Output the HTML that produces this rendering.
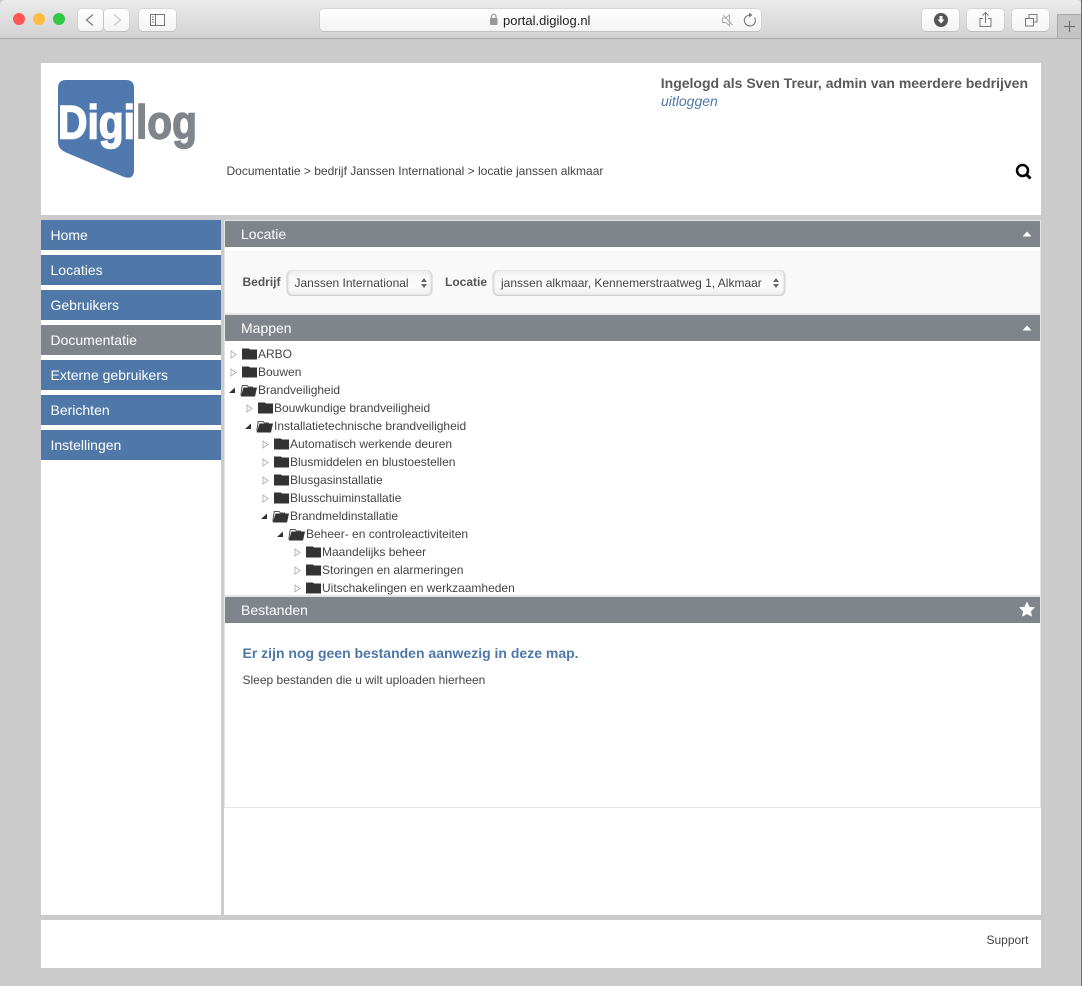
<!DOCTYPE html>
<html><head><meta charset="utf-8">
<style>
html,body{margin:0;padding:0;background:#cbcbcb}
body{width:1082px;height:986px;position:relative;overflow:hidden;font-family:"Liberation Sans",sans-serif;color:#444}
.a{position:absolute}
.t{position:absolute;white-space:nowrap}
.btn{position:absolute;top:9px;height:22px;background:linear-gradient(#fff,#f4f4f4);border-radius:4px;box-shadow:0 0 0 .5px #c4c4c4,0 1px 0 #bbb}
.nav{position:absolute;left:41px;width:180px;height:30px;background:#4f78a8;color:#fff;font-size:14px;line-height:30px;text-indent:9.5px}
.ph{position:absolute;left:225px;width:815px;height:26px;background:#80858c;color:#fff;font-size:14px;line-height:26px;text-indent:16px}
.r{position:absolute;font-size:12px;line-height:18px;color:#444;white-space:nowrap}
.sel{position:absolute;top:270px;height:25px;background:linear-gradient(#ececec,#f9f9f9 30%,#fbfbfb 70%,#ededed);border-radius:5px;box-shadow:inset 2px 0 2px -1px #ccc,inset -2px 0 2px -1px #ccc,0 .5px 0 .5px #d0d0d0;font-size:12px;line-height:26px;color:#444;white-space:nowrap}
svg{position:absolute;overflow:visible}
</style></head><body>

<!-- window chrome -->
<div class="a" style="left:0;top:0;width:1082px;height:38px;background:linear-gradient(#ebebeb,#d2d2d2);border-bottom:1px solid #a8a8a8;border-radius:5px 5px 0 0"></div>
<div class="a" style="left:1081px;top:0;width:1px;height:986px;background:#6b6f78"></div>
<div class="a" style="left:13px;top:13px;width:12px;height:12px;border-radius:50%;background:#fc5753"></div>
<div class="a" style="left:33px;top:13px;width:12px;height:12px;border-radius:50%;background:#fdbc40"></div>
<div class="a" style="left:53px;top:13px;width:12px;height:12px;border-radius:50%;background:#33c748"></div>

<div class="btn" style="left:78px;width:25px"></div>
<div class="btn" style="left:104px;width:25px"></div>
<svg style="left:0;top:0" width="1" height="1"><path d="M93 14.500l-6.500 5.500 6.500 5.500" fill="none" stroke="#808080" stroke-width="1.300"/><path d="M114 14.500l6.500 5.500-6.500 5.500" fill="none" stroke="#cacaca" stroke-width="1.300"/></svg>
<div class="btn" style="left:139px;width:37px"></div>
<svg style="left:0;top:0" width="1" height="1"><rect x="150.5" y="14.5" width="14" height="11" fill="none" stroke="#777"/><path d="M155.5 14.5v11" stroke="#777"/><path d="M152 17h2M152 19.500h2M152 22h2" stroke="#888"/></svg>

<div class="btn" style="left:320px;width:441px"></div>
<svg style="left:0;top:0" width="1" height="1"><rect x="490" y="18" width="7.500" height="7" rx="1" fill="#999"/><path d="M491.500 18v-1.500a2.200 2.200 0 0 1 4.500 0V18" fill="none" stroke="#999" stroke-width="1.200"/></svg>
<div class="t" style="left:503px;top:13px;font-size:13px;line-height:15px;color:#222">portal.digilog.nl</div>
<svg style="left:0;top:0" width="1" height="1">
<path d="M722.500 18h3l4-3v10.500l-4-3h-3z" fill="none" stroke="#aaa"/><path d="M723 15l9.500 10" stroke="#aaa"/>
<path d="M754.500 17.500a5.500 5.500 0 1 1-5-2.500" fill="none" stroke="#777" stroke-width="1.100"/><path d="M749 12.500l3.500 2.500-3.500 2.500z" fill="#777"/>
</svg>

<div class="btn" style="left:922px;width:37px"></div>
<div class="btn" style="left:967px;width:37px"></div>
<div class="btn" style="left:1012px;width:37px"></div>
<svg style="left:0;top:0" width="1" height="1">
<circle cx="941" cy="20" r="7" fill="#555"/><path d="M939.500 16h3v3.500h2l-3.500 4-3.500-4h2z" fill="#fff"/>
<path d="M983 18.500h-3v8h11v-8h-3" fill="none" stroke="#777"/><path d="M985.500 23v-10M982.500 15.500l3-3 3 3" fill="none" stroke="#777"/>
<path d="M1029 18v-3.500h8v7.500h-3.500" fill="none" stroke="#777"/><rect x="1025.500" y="18.500" width="8" height="7.500" fill="#f8f8f8" stroke="#777"/>
</svg>
<div class="a" style="left:1057px;top:14px;width:24px;height:24px;background:#c4c4c4;border-left:1px solid #a8a8a8;border-top:1px solid #a8a8a8;box-sizing:border-box"></div>
<svg style="left:0;top:0" width="1" height="1"><path d="M1069.500 21v11M1064 26.500h11" stroke="#666"/></svg>

<!-- header -->
<div class="a" style="left:41px;top:63px;width:1000px;height:152px;background:#fff"></div>
<svg style="left:0;top:0" width="1" height="1">
<path d="M66 80H126Q134 80 134 88V170Q134 180 124 177L66 152.500Q58 149 58 142V88Q58 80 66 80Z" fill="#4f78ae"/>
<text x="58" y="138.500" font-family="'Liberation Sans',sans-serif" font-size="47" font-weight="700" fill="#fff" stroke="#fff" stroke-width="1.600" textLength="77" lengthAdjust="spacingAndGlyphs">Digi</text>
<text x="136" y="138.500" font-family="'Liberation Sans',sans-serif" font-size="47" font-weight="700" fill="#80858c" stroke="#80858c" stroke-width="1.400" textLength="61" lengthAdjust="spacingAndGlyphs">log</text>
</svg>
<div class="t" style="right:54px;top:75px;font-size:14px;line-height:16px;font-weight:700;color:#5a5a5a">Ingelogd als Sven Treur, admin van meerdere bedrijven</div>
<div class="t" style="left:661px;top:93px;font-size:14px;line-height:16px;font-style:italic;color:#4f78a8">uitloggen</div>
<div class="t" style="left:226.500px;top:164px;font-size:12px;line-height:15px;color:#444">Documentatie &gt; bedrijf Janssen International &gt; locatie janssen alkmaar</div>
<svg style="left:0;top:0" width="1" height="1"><circle cx="1022.500" cy="170.500" r="5.500" fill="none" stroke="#000" stroke-width="2.500"/><path d="M1026.500 174.500l4 4" stroke="#000" stroke-width="3"/></svg>

<!-- nav -->
<div class="a" style="left:41px;top:220px;width:180px;height:695px;background:#fff"></div>
<div class="nav" style="top:220px">Home</div>
<div class="nav" style="top:255px">Locaties</div>
<div class="nav" style="top:290px">Gebruikers</div>
<div class="nav" style="top:325px;background:#80858c">Documentatie</div>
<div class="nav" style="top:360px">Externe gebruikers</div>
<div class="nav" style="top:395px">Berichten</div>
<div class="nav" style="top:430px">Instellingen</div>

<!-- content -->
<div class="a" style="left:224px;top:220px;width:817px;height:695px;background:#fff"></div>
<div class="a" style="left:224px;top:220px;width:817px;height:588px;background:#e4e4e4"></div>
<div class="ph" style="top:221px">Locatie</div>
<svg style="left:0;top:0" width="1" height="1"><path d="M1022.500 236.500l4.500-5 4.500 5z" fill="#fff"/></svg>
<div class="a" style="left:225px;top:247px;width:815px;height:66px;background:linear-gradient(#fff 4px,#f9f9f9 4px)"></div>
<div class="t" style="left:242.500px;top:275px;font-size:12px;line-height:14px;font-weight:700;color:#555">Bedrijf</div>
<div class="sel" style="left:287px;width:145px;text-indent:7.500px">Janssen International</div>
<svg style="left:0;top:0" width="1" height="1"><path d="M421 282l3-4 3 4zM421 284l3 4 3-4z" fill="#666"/></svg>
<div class="t" style="left:445px;top:275px;font-size:12px;line-height:14px;font-weight:700;color:#555">Locatie</div>
<div class="sel" style="left:493px;width:292px;text-indent:8px">janssen alkmaar, Kennemerstraatweg 1, Alkmaar</div>
<svg style="left:0;top:0" width="1" height="1"><path d="M773 282l3-4 3 4zM773 284l3 4 3-4z" fill="#666"/></svg>

<div class="ph" style="top:315px">Mappen</div>
<svg style="left:0;top:0" width="1" height="1"><path d="M1022.500 330.500l4.500-5 4.500 5z" fill="#fff"/></svg>
<div class="a" style="left:225px;top:341px;width:815px;height:254px;background:#fff;overflow:hidden"></div>

<svg style="left:0;top:0" width="1" height="1">
<defs>
<g id="c"><path d="M.5 1v7l5-3.500z" fill="#fff" stroke="#aaa" stroke-width=".8"/></g>
<g id="e"><path d="M6 0v5.500H0z" fill="#333"/></g>
<g id="f"><path d="M0 .5H7L8 1.500H15V11.500H0Z" fill="#333"/></g>
<g id="o"><path d="M.8 11.500L2.200 1.500H7L8.500 3H13" fill="none" stroke="#555" stroke-width="1"/><path d="M3.500 3.500H17L15 12.500H.8Z" fill="#333"/></g>
</defs>
<use href="#c" x="230.500" y="350"/><use href="#f" x="242" y="348"/>
<use href="#c" x="230.500" y="368"/><use href="#f" x="242" y="366"/>
<use href="#e" x="229" y="387.500"/><use href="#o" x="240" y="384"/>
<use href="#c" x="246.500" y="404"/><use href="#f" x="258" y="402"/>
<use href="#e" x="245" y="423.500"/><use href="#o" x="256" y="420"/>
<use href="#c" x="262.500" y="440"/><use href="#f" x="274" y="438"/>
<use href="#c" x="262.500" y="458"/><use href="#f" x="274" y="456"/>
<use href="#c" x="262.500" y="476"/><use href="#f" x="274" y="474"/>
<use href="#c" x="262.500" y="494"/><use href="#f" x="274" y="492"/>
<use href="#e" x="261" y="513.500"/><use href="#o" x="272" y="510"/>
<use href="#e" x="277" y="531.500"/><use href="#o" x="288" y="528"/>
<use href="#c" x="294.500" y="548"/><use href="#f" x="306" y="546"/>
<use href="#c" x="294.500" y="566"/><use href="#f" x="306" y="564"/>
<use href="#c" x="294.500" y="584"/><use href="#f" x="306" y="582"/>
</svg>
<div class="r" style="left:258px;top:345px">ARBO</div>
<div class="r" style="left:258px;top:363px">Bouwen</div>
<div class="r" style="left:258px;top:381px">Brandveiligheid</div>
<div class="r" style="left:274px;top:399px">Bouwkundige brandveiligheid</div>
<div class="r" style="left:274px;top:417px">Installatietechnische brandveiligheid</div>
<div class="r" style="left:290px;top:435px">Automatisch werkende deuren</div>
<div class="r" style="left:290px;top:453px">Blusmiddelen en blustoestellen</div>
<div class="r" style="left:290px;top:471px">Blusgasinstallatie</div>
<div class="r" style="left:290px;top:489px">Blusschuiminstallatie</div>
<div class="r" style="left:290px;top:507px">Brandmeldinstallatie</div>
<div class="r" style="left:306px;top:525px">Beheer- en controleactiviteiten</div>
<div class="r" style="left:322px;top:543px">Maandelijks beheer</div>
<div class="r" style="left:322px;top:561px">Storingen en alarmeringen</div>
<div class="r" style="left:322px;top:579px">Uitschakelingen en werkzaamheden</div>

<div class="ph" style="top:597px">Bestanden</div>
<svg style="left:0;top:0" width="1" height="1"><path d="M1027 601.500l2.400 5.200 5.600.7-4.100 3.800 1.100 5.600-5-2.800-5 2.800 1.100-5.600-4.100-3.800 5.600-.7z" fill="#fff"/></svg>
<div class="a" style="left:225px;top:623px;width:815px;height:184px;background:#fff"></div>
<div class="t" style="left:242.500px;top:645px;font-size:14px;line-height:16px;font-weight:700;color:#4f78a8">Er zijn nog geen bestanden aanwezig in deze map.</div>
<div class="t" style="left:242.500px;top:673px;font-size:12px;line-height:15px;color:#444">Sleep bestanden die u wilt uploaden hierheen</div>

<!-- footer -->
<div class="a" style="left:41px;top:920px;width:1000px;height:48px;background:#fff"></div>
<div class="t" style="right:53.500px;top:933px;font-size:12px;line-height:15px;color:#444">Support</div>
</body></html>
